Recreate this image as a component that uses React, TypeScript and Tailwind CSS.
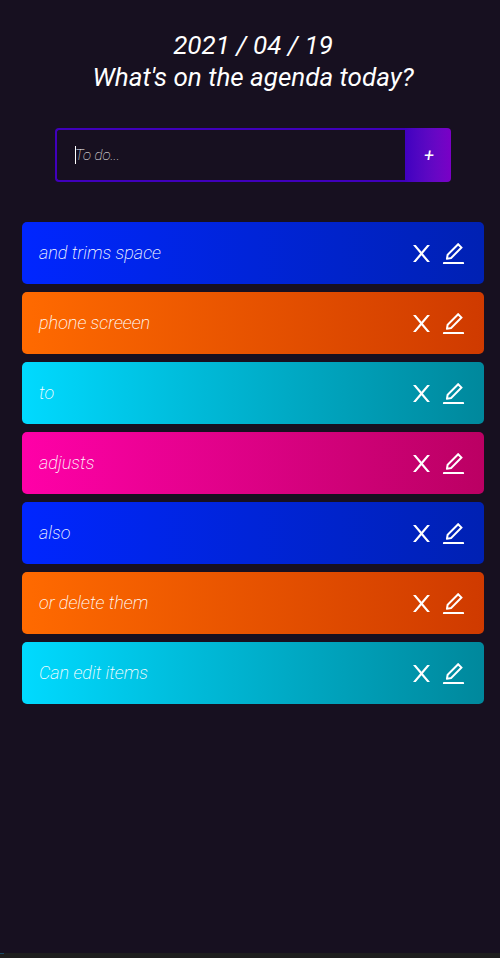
import { useState } from "react";
import type { FormEvent } from "react";
import { AiOutlineEdit } from "react-icons/ai";

type Todo = { id: number; text: string };

const gradients = [
  "from-[#0026ff] to-[#0021b3]",
  "from-[#ff6a00] to-[#cf3a00]",
  "from-[#00daff] to-[#00889c]",
  "from-[#ff00a8] to-[#bb0063]",
];

const initialTodos: Todo[] = [
  { id: 1, text: "and trims space" },
  { id: 2, text: "phone screeen" },
  { id: 3, text: "to" },
  { id: 4, text: "adjusts" },
  { id: 5, text: "also" },
  { id: 6, text: "or delete them" },
  { id: 7, text: "Can edit items" },
];

function CloseIcon() {
  return (
    <svg viewBox="0 0 1024 1024" width="1em" height="1em" fill="currentColor" aria-hidden="true">
      <path d="M563.8 512l262.5-312.9c4.4-5.2.7-13.1-6.1-13.1h-79.8c-4.7 0-9.2 2.1-12.3 5.7L511.6 449.8 295.1 191.7c-3-3.6-7.5-5.7-12.3-5.7H203c-6.8 0-10.5 7.9-6.1 13.1L459.4 512 196.9 824.9A7.95 7.95 0 0 0 203 838h79.8c4.7 0 9.2-2.1 12.3-5.7l216.5-258.1 216.5 258.1c3 3.6 7.5 5.7 12.3 5.7h79.8c6.8 0 10.5-7.9 6.1-13.1L563.8 512z" />
    </svg>
  );
}

function TodoForm({ onAdd }: { onAdd: (text: string) => void }) {
  const [value, setValue] = useState("");

  const submit = (event: FormEvent) => {
    event.preventDefault();
    if (value.trim()) onAdd(value.trim());
    setValue("");
  };

  return (
    <form onSubmit={submit} className="mt-[35px] mr-[49px] ml-[55px] flex h-[54px]">
      <div className="relative min-w-0 flex-1">
        <input
          autoFocus
          aria-label="To do"
          value={value}
          onChange={(event) => setValue(event.target.value)}
          placeholder="To do..."
          className="h-full w-full rounded-l border-2 border-r-0 border-[#4000bb] bg-transparent pl-[18px] text-[15px] font-thin italic text-white caret-transparent outline-none placeholder:text-white"
        />
        <span className="absolute top-[18px] left-5 h-[18px] w-px bg-white" />
      </div>
      <button
        type="submit"
        aria-label="Add"
        className="w-[46px] rounded-r bg-linear-to-r from-[#4000c0] to-[#7a00c6] pl-0.5 text-lg italic text-white"
      >
        +
      </button>
    </form>
  );
}

export default function App() {
  const [todos, setTodos] = useState(initialTodos);

  const add = (text: string) => setTodos([{ id: Date.now(), text }, ...todos]);
  const remove = (id: number) => setTodos(todos.filter((todo) => todo.id !== id));

  return (
    <div className="flex min-h-screen flex-col bg-[#171020] font-['Roboto',sans-serif] text-white italic">
      <main className="flex-1 pt-[29px]">
        <h1 className="pl-[6px] text-center text-[26px] leading-8 font-normal">
          2021 / 04 / 19
          <br />
          What's on the agenda today?
        </h1>
        <TodoForm onAdd={add} />
        <ul className="mt-10 mr-4 ml-[22px] flex flex-col gap-2">
          {todos.map((todo, index) => (
            <li
              key={todo.id}
              className={`flex h-[62px] items-center justify-between rounded-[5px] bg-linear-to-r pr-[17px] pl-[17px] ${gradients[index % gradients.length]}`}
            >
              <span className="text-lg font-extralight">{todo.text}</span>
              <span className="flex gap-[5px] text-[27px]">
                <button type="button" aria-label={`Delete ${todo.text}`} onClick={() => remove(todo.id)}>
                  <CloseIcon />
                </button>
                <button type="button" aria-label={`Edit ${todo.text}`}>
                  <AiOutlineEdit />
                </button>
              </span>
            </li>
          ))}
        </ul>
      </main>
      <footer className="flex h-[5px] bg-[#1e1e1e]">
        <span className="h-px w-1 bg-[#1c4a63]" />
      </footer>
    </div>
  );
}
